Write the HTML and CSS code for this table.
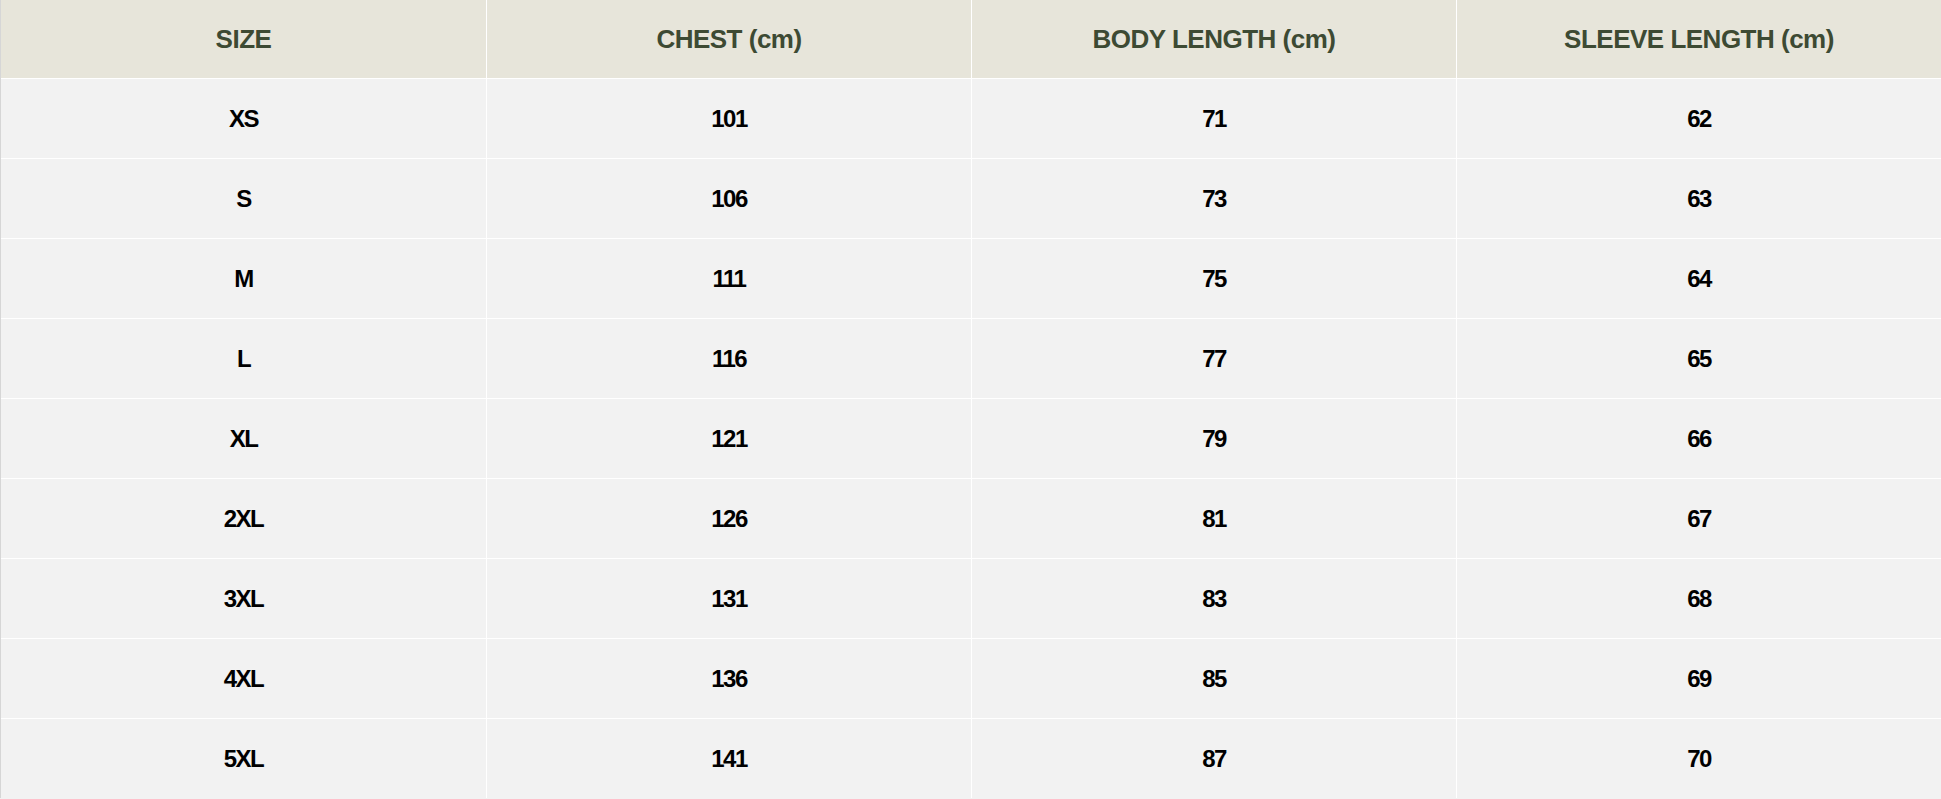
FILE: index.html
```html
<!DOCTYPE html>
<html lang="en">
<head>
<meta charset="utf-8">
<title>Size Chart</title>
<link rel="stylesheet" href="styles.css">
</head>
<body>
<div class="chart">
  <div class="row head">
    <div class="cell">SIZE</div>
    <div class="cell">CHEST (cm)</div>
    <div class="cell">BODY LENGTH (cm)</div>
    <div class="cell">SLEEVE LENGTH (cm)</div>
  </div>
  <div class="row"><div class="cell">XS</div><div class="cell">101</div><div class="cell">71</div><div class="cell">62</div></div>
  <div class="row"><div class="cell">S</div><div class="cell">106</div><div class="cell">73</div><div class="cell">63</div></div>
  <div class="row"><div class="cell">M</div><div class="cell">111</div><div class="cell">75</div><div class="cell">64</div></div>
  <div class="row"><div class="cell">L</div><div class="cell">116</div><div class="cell">77</div><div class="cell">65</div></div>
  <div class="row"><div class="cell">XL</div><div class="cell">121</div><div class="cell">79</div><div class="cell">66</div></div>
  <div class="row"><div class="cell">2XL</div><div class="cell">126</div><div class="cell">81</div><div class="cell">67</div></div>
  <div class="row"><div class="cell">3XL</div><div class="cell">131</div><div class="cell">83</div><div class="cell">68</div></div>
  <div class="row"><div class="cell">4XL</div><div class="cell">136</div><div class="cell">85</div><div class="cell">69</div></div>
  <div class="row"><div class="cell">5XL</div><div class="cell">141</div><div class="cell">87</div><div class="cell">70</div></div>
</div>
</body>
</html>
```
FILE: styles.css
```css
html, body {
  margin: 0;
  padding: 0;
  background: #f2f2f2;
}
.chart {
  display: flex;
  flex-direction: column;
  width: 1941px;
  border-left: 1px solid #d6d6d6;
  box-sizing: border-box;
  font-family: "Liberation Sans", Arial, sans-serif;
  font-weight: 700;
}
.row {
  display: grid;
  grid-template-columns: repeat(4, 1fr);
  height: 80px;
  border-top: 1px solid #ffffff;
  box-sizing: border-box;
  background: #f2f2f2;
}
.row.head {
  height: 78px;
  border-top: 0;
  background: #e7e5da;
}
.cell {
  display: flex;
  align-items: center;
  justify-content: center;
  border-left: 1px solid #ffffff;
  font-size: 24px;
  letter-spacing: -1.5px;
  color: #000000;
}
.cell:first-child {
  border-left: 0;
}
.head .cell {
  font-size: 26px;
  letter-spacing: -0.5px;
  color: #3d4a33;
}
```
